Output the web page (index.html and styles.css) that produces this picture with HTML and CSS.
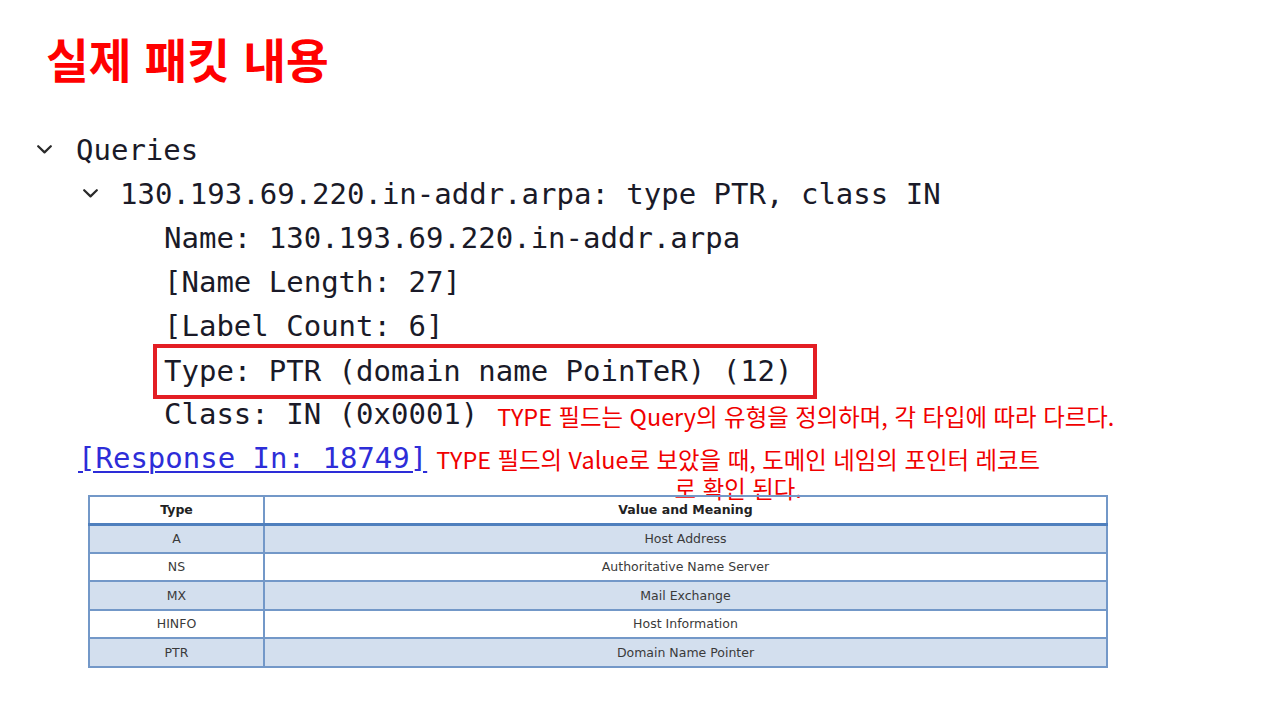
FILE: index.html
```html
<!DOCTYPE html>
<html lang="ko">
<head>
<meta charset="utf-8">
<title>실제 패킷 내용</title>
<link rel="stylesheet" href="styles.css">
</head>
<body>
<div class="slide">
  <h1 class="title">실제 패킷 내용</h1>

  <div class="tree">
    <div class="row lv0">
      <span class="chev"><svg width="15" height="9" viewBox="0 0 15 9"><polyline points="1.2,1.2 7.5,7.4 13.8,1.2" fill="none" stroke="#2a2a2a" stroke-width="2.2" stroke-linecap="round" stroke-linejoin="round"/></svg></span>
      <span class="mono">Queries</span>
    </div>
    <div class="row lv1">
      <span class="chev"><svg width="15" height="9" viewBox="0 0 15 9"><polyline points="1.2,1.2 7.5,7.4 13.8,1.2" fill="none" stroke="#2a2a2a" stroke-width="2.2" stroke-linecap="round" stroke-linejoin="round"/></svg></span>
      <span class="mono">130.193.69.220.in-addr.arpa: type PTR, class IN</span>
    </div>
    <div class="row lv2"><span class="mono">Name: 130.193.69.220.in-addr.arpa</span></div>
    <div class="row lv2"><span class="mono">[Name Length: 27]</span></div>
    <div class="row lv2"><span class="mono">[Label Count: 6]</span></div>
    <div class="row lv2"><span class="mono hl">Type: PTR (domain name PoinTeR) (12)</span></div>
    <div class="row lv2">
      <span class="mono">Class: IN (0x0001)</span>
      <span class="note note-inline">TYPE 필드는 Query의 유형을 정의하며, 각 타입에 따라 다르다.</span>
    </div>
    <div class="row resp">
      <span class="mono link">[Response In: 18749]</span>
      <span class="note note-block">TYPE 필드의 Value로 보았을 때, 도메인 네임의 포인터 레코트<br>로 확인 된다.</span>
    </div>
  </div>

  <table class="rr">
    <thead>
      <tr><th class="c1">Type</th><th>Value and Meaning</th></tr>
    </thead>
    <tbody>
      <tr class="alt"><td class="c1">A</td><td>Host Address</td></tr>
      <tr><td class="c1">NS</td><td>Authoritative Name Server</td></tr>
      <tr class="alt"><td class="c1">MX</td><td>Mail Exchange</td></tr>
      <tr><td class="c1">HINFO</td><td>Host Information</td></tr>
      <tr class="alt"><td class="c1">PTR</td><td>Domain Name Pointer</td></tr>
    </tbody>
  </table>
</div>
</body>
</html>
```
FILE: styles.css
```css
* { box-sizing: border-box; }
html, body { margin: 0; padding: 0; background: #fff; }
body { width: 1280px; height: 720px; overflow: hidden; }

.slide {
  width: 1280px;
  height: 720px;
  padding-top: 28px;
  display: flex;
  flex-direction: column;
}

.title {
  margin: 0 0 0 46px;
  font-family: "Noto Sans CJK KR", "Noto Sans", sans-serif;
  font-weight: 700;
  font-size: 46.5px;
  line-height: 60px;
  color: #ff0000;
}

.tree { margin-top: 40px; }

.row {
  display: flex;
  align-items: center;
  height: 44px;
}
.lv0 { padding-left: 37px; }
.lv1 { padding-left: 83px; }
.lv2 { padding-left: 164px; }
.resp { padding-left: 78px; align-items: flex-start; height: auto; }

.chev {
  width: 39px;
  flex: none;
  display: flex;
  align-items: center;
}
.lv1 .chev { width: 37px; }
.chev svg { display: block; margin-top: -1px; }

.mono {
  font-family: "DejaVu Sans Mono", "Liberation Mono", monospace;
  font-size: 29px;
  line-height: 44px;
  color: #1a1a28;
  white-space: pre;
}

.hl {
  display: inline-block;
  border: 4px solid #e31e24;
  padding: 0 20px 0 7px;
  margin: -4px 0 -7px -11px;
  line-height: 47px;
}

.link {
  color: #2d2dd8;
  text-decoration: underline;
  text-decoration-thickness: 2px;
  text-underline-offset: 3px;
}

.note {
  font-family: "Noto Sans CJK KR", "Noto Sans", sans-serif;
  font-size: 23.4px;
  color: #f00000;
  white-space: nowrap;
}
.note-inline { margin-left: 19px; line-height: 30px; margin-top: 4px; }
.note-block {
  margin-left: 9px;
  width: 604px;
  text-align: center;
  line-height: 29px;
  margin-top: 9px;
  margin-bottom: -8px;
}

.rr {
  margin-left: 88px;
  width: 1020px;
  border-collapse: collapse;
  font-family: "DejaVu Sans", Verdana, sans-serif;
  font-size: 12.5px;
  color: #3a3a3a;
  position: relative;
}
.rr th, .rr td {
  border: 2px solid #7398c8;
  text-align: center;
  height: 28.5px;
  padding: 0;
}
.rr th { height: 28px; font-weight: 700; color: #222; border-bottom: 3px solid #4f7fbd; }
.rr .c1 { width: 175px; }
.rr tr.alt td { background: #d3dfee; }
```
